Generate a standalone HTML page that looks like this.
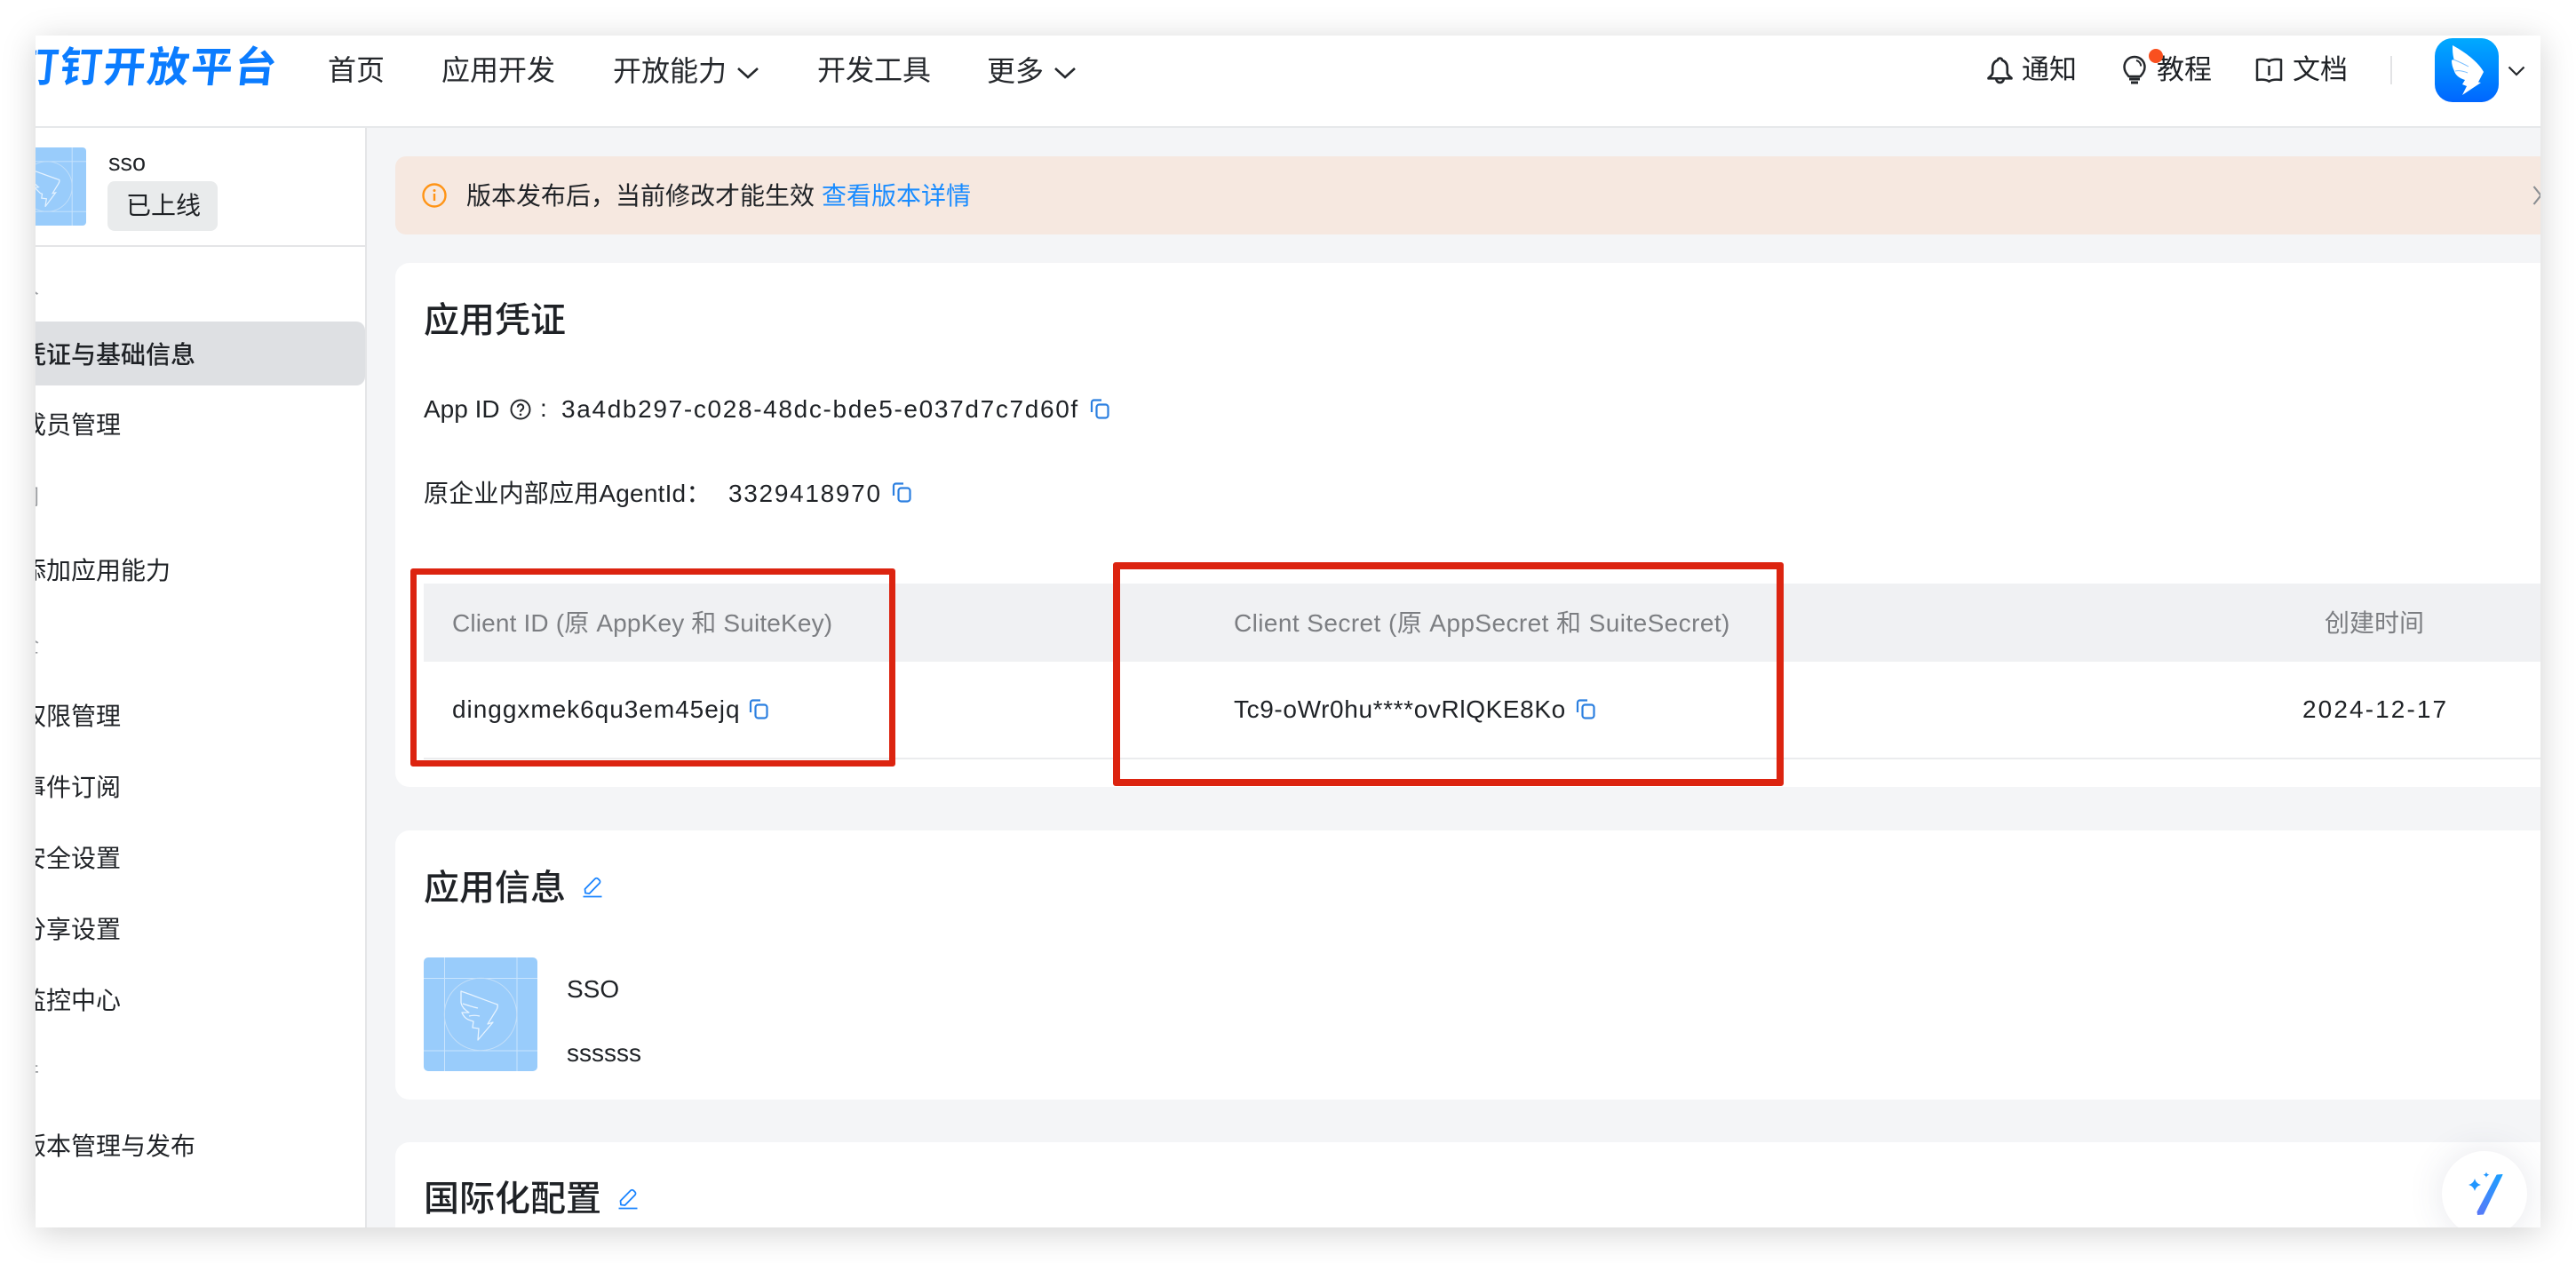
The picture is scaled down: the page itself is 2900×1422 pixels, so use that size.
<!DOCTYPE html>
<html lang="zh-CN"><head><meta charset="utf-8"><title>钉钉开放平台</title>
<style>
html,body{margin:0;padding:0;width:2900px;height:1422px;background:#fff;overflow:hidden}
body{font-family:"Liberation Sans","Noto Sans CJK SC",sans-serif;color:#1f2226;position:relative}
#w{position:absolute;left:40px;top:40px;width:2820px;height:1342px;overflow:hidden;background:#f4f5f7}
#sh{position:absolute;left:40px;top:40px;width:2820px;height:1342px;box-shadow:0 6px 36px rgba(0,0,0,.18)}
#p{position:absolute;left:-40px;top:-40px;width:2900px;height:1422px}
.a{position:absolute}
.t{position:absolute;white-space:nowrap;line-height:40px;height:40px;font-size:28px}
.n{font-size:32px;color:#25282c}
.h{font-size:40px;font-weight:500;color:#1f2226;line-height:50px;height:50px}
.g{color:#7c7e82}
.s{color:#9a9ca0;font-size:24px}
svg{position:absolute;overflow:visible}
</style></head><body>
<div id="sh"></div>
<div id="w"><div id="p">
<!-- header -->
<div class="a" style="left:0;top:0;width:2900px;height:142px;background:#fff"></div>
<div class="a" style="left:0;top:142px;width:2900px;height:2px;background:#e6e8ea"></div>
<div class="t" style="left:16px;top:51px;height:50px;line-height:50px;font-size:47px;font-weight:700;letter-spacing:2.100px;color:#0b7cff;transform:skewX(-6deg);transform-origin:0 100%">钉钉开放平台</div>
<div class="t n" style="left:369px;top:59px">首页</div>
<div class="t n" style="left:497px;top:59px">应用开发</div>
<div class="t n" style="left:690px;top:60px">开放能力</div>
<svg style="left:829px;top:75px" width="26" height="14" viewBox="0 0 26 14"><path d="M2 2l11 10L24 2" fill="none" stroke="#25282c" stroke-width="2.6"/></svg>
<div class="t n" style="left:920px;top:59px">开发工具</div>
<div class="t n" style="left:1111px;top:60px">更多</div>
<svg style="left:1186px;top:75px" width="26" height="14" viewBox="0 0 26 14"><path d="M2 2l11 10L24 2" fill="none" stroke="#25282c" stroke-width="2.6"/></svg>
<!-- bell -->
<svg style="left:2236px;top:63px" width="31" height="31" viewBox="0 0 30 30"><path d="M15 2.500c-1.500 0-2.300 1-2.500 2.200C8.800 5.900 7 9 7 13v5.500c0 2-2 3.500-4.500 5.500v.5h25V24c-2.500-2-4.500-3.500-4.500-5.500V13c0-4-1.800-7.100-5.500-8.300C17.300 3.500 16.500 2.500 15 2.500z" fill="none" stroke="#25282c" stroke-width="2.600" stroke-linejoin="round"/><path d="M11 25a4 4 0 0 0 8 0" fill="none" stroke="#25282c" stroke-width="2.600"/></svg>
<div class="t" style="left:2276px;top:59px;font-size:31px">通知</div>
<!-- bulb -->
<svg style="left:2389px;top:62px" width="28" height="34" viewBox="0 0 28 34"><path d="M14 2C7 2 2.500 7.500 2.500 13.500c0 4.500 2.500 7.500 5 10.500h13c2.500-3 5-6 5-10.500C25.500 7.500 21 2 14 2z" fill="none" stroke="#25282c" stroke-width="2.500"/><path d="M16 6c3 .8 5 3.300 5.300 6.500" fill="none" stroke="#25282c" stroke-width="2"/><path d="M8 27h12M10 31h8" stroke="#25282c" stroke-width="3"/></svg>
<div class="a" style="left:2419px;top:55px;width:16px;height:16px;border-radius:50%;background:#f9501f;z-index:2"></div>
<div class="t" style="left:2428px;top:59px;font-size:31px">教程</div>
<!-- book -->
<svg style="left:2539px;top:65px" width="31" height="29" viewBox="0 0 31 29"><path d="M15.500 4C13 1.800 7 1.500 2 2.300V25c5-.8 11-.5 13.500 1.800C18 24.500 24 24.200 29 25V2.300C24 1.500 18 1.800 15.500 4z" fill="none" stroke="#25282c" stroke-width="2.500" stroke-linejoin="round"/><path d="M15.500 9v11" stroke="#25282c" stroke-width="2.500"/></svg>
<div class="t" style="left:2581px;top:59px;font-size:31px">文档</div>
<div class="a" style="left:2691px;top:63px;width:2px;height:32px;background:#e2e3e5"></div>
<!-- app icon -->
<div class="a" style="left:2741px;top:43px;width:72px;height:72px;border-radius:20px;background:linear-gradient(180deg,#00aaff,#0066ff)"></div>
<svg style="left:2741px;top:43px" width="72" height="72" viewBox="0 0 72 72"><path d="M20 8C31 14 48 25 55 38L49 49.500 52 50 31 64 36 54 31 52 34 47C27 45 23 41 22 37 20 33 19 29 19 25 20 24 21 24 22 25 20 19 20 13 20 8z" fill="#fff"/><path d="M21 24c5 2 10 4 17 8M23 37c5-1 9 0 14 2" stroke="#7cc0ff" stroke-width="1" fill="none"/></svg>
<svg style="left:2823px;top:74px" width="20" height="12" viewBox="0 0 20 12"><path d="M1.500 1.500L10 10l8.500-8.500" fill="none" stroke="#25282c" stroke-width="2.200"/></svg>

<!-- sidebar -->
<div class="a" style="left:0;top:144px;width:411px;height:1278px;background:#fff"></div>
<div class="a" style="left:411px;top:144px;width:2px;height:1278px;background:#e4e5e7"></div>
<div class="a" style="left:9px;top:166px;width:88px;height:88px;background:#99ccfb;overflow:hidden;border-radius:4px">
<svg style="left:0;top:0" width="88" height="88" viewBox="0 0 128 128"><path d="M23 0v128M105 0v128M0 23h128M0 105h128" stroke="#c9e4fd" stroke-width="1.400"/><circle cx="64" cy="64" r="41" fill="none" stroke="#c3dff9" stroke-width="1.300"/><path d="M42 38c12 4 24 9 42 15 1 3-1 6-3 9l-8 13 5-1-17 23 2-13-8-1 1-7-3-1c-4-4-7-7-9-9l6-1c-4-3-7-6-9-11 0-7-1-12 1-16z" fill="none" stroke="#e4f2ff" stroke-width="1.800"/></svg></div>
<div class="t" style="left:122px;top:163px;font-size:27px">sso</div>
<div class="a" style="left:121px;top:204px;width:124px;height:56px;border-radius:8px;background:#e9ebec"></div>
<div class="t" style="left:142px;top:212px">已上线</div>
<div class="a" style="left:0;top:276px;width:411px;height:2px;background:#e4e5e7"></div>
<div class="t s" style="left:20px;top:303px">人</div>
<div class="a" style="left:0;top:362px;width:411px;height:72px;background:#dee0e3;border-radius:0 10px 10px 0"></div>
<div class="t" style="left:24px;top:380px;font-weight:500">凭证与基础信息</div>
<div class="t" style="left:24px;top:459px">成员管理</div>
<div class="t s" style="left:20px;top:541px">们</div>
<div class="t" style="left:24px;top:623px">添加应用能力</div>
<div class="t s" style="left:20px;top:707px">全</div>
<div class="t" style="left:24px;top:787px">权限管理</div>
<div class="t" style="left:24px;top:867px">事件订阅</div>
<div class="t" style="left:24px;top:947px">安全设置</div>
<div class="t" style="left:24px;top:1027px">分享设置</div>
<div class="t" style="left:24px;top:1107px">监控中心</div>
<div class="t s" style="left:20px;top:1191px">行</div>
<div class="t" style="left:24px;top:1271px">版本管理与发布</div>

<!-- banner -->
<div class="a" style="left:445px;top:176px;width:2415px;height:88px;background:#f6e8e0;border-radius:12px 0 0 12px"></div>
<svg style="left:475px;top:206px" width="28" height="28" viewBox="0 0 28 28"><circle cx="14" cy="14" r="12.500" fill="none" stroke="#ff9416" stroke-width="2.400"/><path d="M14 12v8" stroke="#ff9416" stroke-width="2.400"/><circle cx="14" cy="8.500" r="1.500" fill="#ff9416"/></svg>
<div class="t" style="left:525px;top:201px">版本发布后，当前修改才能生效</div>
<div class="t" style="left:925px;top:201px;color:#1a8cff">查看版本详情</div>
<svg style="left:2851px;top:209px" width="20" height="22" viewBox="0 0 20 22"><path d="M1.500 1l8 10-8 10" fill="none" stroke="#8c8f93" stroke-width="2.200"/></svg>

<!-- card 1 -->
<div class="a" style="left:445px;top:296px;width:2415px;height:590px;background:#fff;border-radius:16px 0 0 16px"></div>
<div class="t h" style="left:477px;top:336px">应用凭证</div>
<div class="t" style="left:477px;top:441px">App ID</div>
<svg style="left:574px;top:449px" width="24" height="24" viewBox="0 0 24 24"><circle cx="12" cy="12" r="10.500" fill="none" stroke="#25282c" stroke-width="2"/><path d="M8.800 9.500a3.200 3.200 0 1 1 4.800 2.800c-1 .6-1.600 1.100-1.600 2.400" fill="none" stroke="#25282c" stroke-width="2"/><circle cx="12" cy="17.800" r="1.300" fill="#25282c"/></svg>
<div class="t" style="left:608px;top:440px">:</div>
<div class="t" style="left:632px;top:441px;letter-spacing:1.66px">3a4db297-c028-48dc-bde5-e037d7c7d60f</div>
<svg style="left:1227px;top:449px" width="22" height="23" viewBox="0 0 22 23"><rect x="7.500" y="6.500" width="13" height="15" rx="3" fill="none" stroke="#2b7fe0" stroke-width="2.200"/><path d="M2 15V4a2.500 2.500 0 0 1 2.500-2.500H13" fill="none" stroke="#2b7fe0" stroke-width="2.200"/></svg>
<div class="t" style="left:477px;top:536px;letter-spacing:.2px">原企业内部应用AgentId：</div>
<div class="t" style="left:820px;top:536px;letter-spacing:1.7px">3329418970</div>
<svg style="left:1004px;top:543px" width="22" height="23" viewBox="0 0 22 23"><rect x="7.500" y="6.500" width="13" height="15" rx="3" fill="none" stroke="#2b7fe0" stroke-width="2.200"/><path d="M2 15V4a2.500 2.500 0 0 1 2.500-2.500H13" fill="none" stroke="#2b7fe0" stroke-width="2.200"/></svg>
<!-- table -->
<div class="a" style="left:477px;top:657px;width:2383px;height:88px;background:#f0f1f3"></div>
<div class="a" style="left:477px;top:853px;width:2383px;height:2px;background:#ebecee"></div>
<div class="t g" style="left:509px;top:682px;letter-spacing:.16px">Client ID (原 AppKey 和 SuiteKey)</div>
<div class="t g" style="left:1389px;top:682px;letter-spacing:.42px">Client Secret (原 AppSecret 和 SuiteSecret)</div>
<div class="t g" style="left:2617px;top:682px">创建时间</div>
<div class="t" style="left:509px;top:779px;letter-spacing:.97px">dinggxmek6qu3em45ejq</div>
<svg style="left:843px;top:787px" width="22" height="23" viewBox="0 0 22 23"><rect x="7.500" y="6.500" width="13" height="15" rx="3" fill="none" stroke="#2b7fe0" stroke-width="2.200"/><path d="M2 15V4a2.500 2.500 0 0 1 2.500-2.500H13" fill="none" stroke="#2b7fe0" stroke-width="2.200"/></svg>
<div class="t" style="left:1389px;top:779px;letter-spacing:.62px">Tc9-oWr0hu****ovRlQKE8Ko</div>
<svg style="left:1774px;top:787px" width="22" height="23" viewBox="0 0 22 23"><rect x="7.500" y="6.500" width="13" height="15" rx="3" fill="none" stroke="#2b7fe0" stroke-width="2.200"/><path d="M2 15V4a2.500 2.500 0 0 1 2.500-2.500H13" fill="none" stroke="#2b7fe0" stroke-width="2.200"/></svg>
<div class="t" style="left:2592px;top:779px;letter-spacing:2.1px">2024-12-17</div>

<!-- card 2 -->
<div class="a" style="left:445px;top:935px;width:2415px;height:303px;background:#fff;border-radius:16px 0 0 16px"></div>
<div class="t h" style="left:477px;top:975px">应用信息</div>
<svg style="left:656px;top:987px" width="22" height="24" viewBox="0 0 22 24"><path d="M.500 22.500h21" stroke="#1a84ff" stroke-width="1.800"/><path d="M3 18.500l-.500-4.500L13.800 2.500a2.500 2.500 0 0 1 3.500 0l1.500 1.500a2.500 2.500 0 0 1 0 3.500L7.500 19z" fill="none" stroke="#1a84ff" stroke-width="1.800" stroke-linejoin="round"/></svg>
<div class="a" style="left:477px;top:1078px;width:128px;height:128px;background:#99ccfb;border-radius:5px"></div>
<svg style="left:477px;top:1078px" width="128" height="128" viewBox="0 0 128 128"><path d="M23.500 0v128M105 0v128M0 23.500h128M0 105h128" stroke="#c9e4fd" stroke-width="1"/><circle cx="64" cy="64" r="40.700" fill="none" stroke="#c3dff9" stroke-width="1"/><path d="M42 38c12 4 24 9 41 15 1 3-1 6-3 9l-8 13 6-2-17 20 1-13-7-1 1-7-3-1c-4-1-8-4-10-9l8 0c-5-3-8-6-9-11 0-5 0-9 0-13z" fill="none" stroke="#e8f4ff" stroke-width="1.300" stroke-linejoin="round"/><path d="M44 52c6 2 12 4 17 5M51 66c4-1 8-1 12 0" fill="none" stroke="#e8f4ff" stroke-width="1.300"/></svg>
<div class="t" style="left:638px;top:1094px">SSO</div>
<div class="t" style="left:638px;top:1166px">ssssss</div>

<!-- card 3 -->
<div class="a" style="left:445px;top:1286px;width:2415px;height:136px;background:#fff;border-radius:16px 0 0 0"></div>
<div class="t h" style="left:477px;top:1325px">国际化配置</div>
<svg style="left:696px;top:1338px" width="22" height="24" viewBox="0 0 22 24"><path d="M.500 22.500h21" stroke="#1a84ff" stroke-width="1.800"/><path d="M3 18.500l-.500-4.500L13.800 2.500a2.500 2.500 0 0 1 3.500 0l1.500 1.500a2.500 2.500 0 0 1 0 3.500L7.500 19z" fill="none" stroke="#1a84ff" stroke-width="1.800" stroke-linejoin="round"/></svg>

<!-- fab -->
<div class="a" style="left:2749px;top:1296px;width:96px;height:96px;border-radius:50%;background:#fff;box-shadow:0 0 40px rgba(60,70,110,.13)"></div>
<svg style="left:2749px;top:1296px" width="96" height="96" viewBox="0 0 96 96"><defs><linearGradient id="wd" x1="1" y1="0" x2="0" y2="1"><stop offset="0" stop-color="#1aa0ff"/><stop offset="1" stop-color="#5a78f8"/></linearGradient></defs><path d="M62 27l6-.500-21.500 44.500-6 .500-.500-3z" fill="url(#wd)" stroke="url(#wd)" stroke-width="1" stroke-linejoin="round"/><path d="M37 31c1.200 4 3 5.800 7 7-4 1.200-5.800 3-7 7-1.200-4-3-5.800-7-7 4-1.200 5.800-3 7-7z" fill="#2196ff"/><path d="M50 23.500c.5 2 1.200 2.500 3.500 3.300-2.300.7-3 1.300-3.500 3.300-.5-2-1.200-2.600-3.500-3.300 2.300-.8 3-1.300 3.500-3.300z" fill="#2196ff"/></svg>

<!-- red annotation boxes -->
<div class="a" style="left:462px;top:640px;width:546px;height:223px;box-sizing:border-box;border:7px solid #dc2410;border-radius:3px"></div>
<div class="a" style="left:1253px;top:633px;width:755px;height:252px;box-sizing:border-box;border:8px solid #dc2410;border-radius:3px"></div>
</div></div>
</body></html>
